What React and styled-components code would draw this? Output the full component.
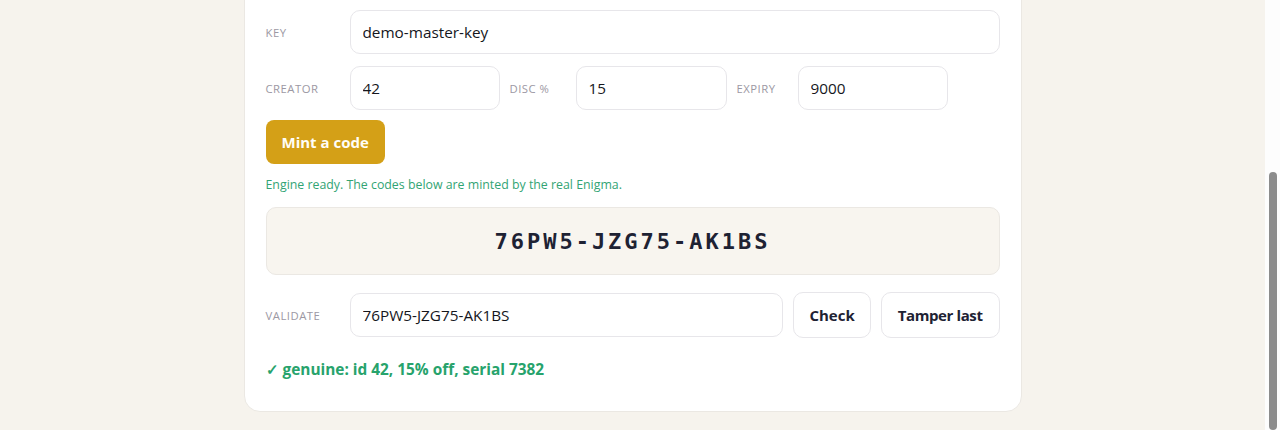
import React, { useLayoutEffect, useRef, useState } from "react";
import styled, { createGlobalStyle } from "styled-components";

const GlobalStyle = createGlobalStyle`
  html, body {
    margin: 0;
    padding: 0;
    background: #f6f3ed;
    font-family: "Open Sans", "Noto Sans", "Liberation Sans", sans-serif;
    overflow: hidden;
  }
  * { box-sizing: border-box; }
`;

const Shell = styled.div`
  height: 100vh;
  display: flex;
  background: #f6f3ed;
`;

const ScrollArea = styled.div`
  flex: 1 1 auto;
  min-width: 0;
  height: 100%;
  overflow-y: auto;
  scrollbar-width: none;
  &::-webkit-scrollbar {
    display: none;
  }
`;

/* slim scrollbar rail drawn beside the scroll area */
const Rail = styled.div`
  flex: none;
  width: 15px;
  height: 100%;
  background: #fdfdfd;
  display: flex;
  justify-content: center;
`;

const Thumb = styled.div`
  width: 8px;
  border-radius: 4px;
  background: #8c8c8c;
`;

const Page = styled.main`
  padding: 260px 0 18px;
`;

const Card = styled.section`
  width: 778px;
  margin: 0 auto;
  background: #ffffff;
  border: 1px solid #ebe8e3;
  border-radius: 16px;
  padding: 36px 21px 31px;
  display: flex;
  flex-direction: column;
`;

const Row = styled.div`
  display: flex;
  align-items: center;
  gap: 10px;
  margin-top: ${(p) => p.$mt || 0}px;
`;

const Label = styled.label`
  flex: none;
  width: ${(p) => p.$w}px;
  font-size: 11.3px;
  letter-spacing: 0.5px;
  text-transform: uppercase;
  color: #9c98a3;
`;

const Field = styled.input`
  height: 44px;
  width: ${(p) => (p.$w ? `${p.$w}px` : "auto")};
  flex: ${(p) => (p.$w ? "none" : "1 1 auto")};
  min-width: 0;
  border: 1px solid #e7e6ea;
  border-radius: 10px;
  background: #fff;
  padding: 0 12px;
  font: inherit;
  font-size: 15.3px;
  color: #15161c;
  outline: none;
`;

const MintButton = styled.button`
  align-self: flex-start;
  height: 44px;
  margin-top: 10px;
  padding: 0 16px;
  border: none;
  border-radius: 8px;
  background: #d4a017;
  color: #fffdf6;
  font: inherit;
  font-size: 15px;
  font-weight: 700;
  cursor: pointer;
`;

const Status = styled.p`
  margin: 12px 0 0;
  font-size: 12.35px;
  line-height: 18px;
  color: ${(p) => p.$color};
`;

const CodeBox = styled.div`
  margin-top: 13px;
  height: 68px;
  border: 1px solid #ebe8e3;
  border-radius: 10px;
  background: #f8f5ef;
  display: flex;
  align-items: center;
  justify-content: center;
  font-family: "DejaVu Sans Mono", "Liberation Mono", monospace;
  font-size: 22px;
  font-weight: 700;
  letter-spacing: 3px;
  color: #1e2233;
`;

const GhostButton = styled.button`
  flex: none;
  height: 46px;
  padding: 0 ${(p) => p.$pad || 16}px;
  border: 1px solid #e7e6ea;
  border-radius: 10px;
  background: #fff;
  color: #1e2233;
  font: inherit;
  font-size: 15px;
  font-weight: 700;
  letter-spacing: ${(p) => p.$ls || 0}px;
  cursor: pointer;
`;

const Result = styled.p`
  margin: 22px 0 0;
  font-size: 15.4px;
  line-height: 20px;
  font-weight: 700;
  color: #27a36c;
`;

export default function App() {
  const viewRef = useRef(null);
  const [thumb, setThumb] = useState({ top: 0, height: 0 });
  const [code] = useState("76PW5-JZG75-AK1BS");
  const [check, setCheck] = useState("76PW5-JZG75-AK1BS");

  const syncThumb = () => {
    const el = viewRef.current;
    if (!el) return;
    const { scrollTop, scrollHeight, clientHeight } = el;
    setThumb({
      top: (scrollTop / scrollHeight) * clientHeight,
      height: (clientHeight / scrollHeight) * clientHeight,
    });
  };

  useLayoutEffect(() => {
    const el = viewRef.current;
    if (el) el.scrollTop = el.scrollHeight;
    syncThumb();
  }, []);

  return (
    <>
      <GlobalStyle />
      <Shell>
        <ScrollArea ref={viewRef} onScroll={syncThumb}>
          <Page>
            <Card>
              <Row>
                <Label $w={74}>Key</Label>
                <Field defaultValue="demo-master-key" />
              </Row>
              <Row $mt={12}>
                <Label $w={74}>Creator</Label>
                <Field $w={150} defaultValue="42" />
                <Label $w={56}>Disc %</Label>
                <Field $w={151} defaultValue="15" />
                <Label $w={51}>Expiry</Label>
                <Field $w={150} defaultValue="9000" />
              </Row>
              <MintButton>Mint a code</MintButton>
              <Status $color="#32a474">
                Engine ready. The codes below are minted by the real Enigma.
              </Status>
              <CodeBox>{code}</CodeBox>
              <Row $mt={17}>
                <Label $w={74}>Validate</Label>
                <Field value={check} onChange={(e) => setCheck(e.target.value)} />
                <GhostButton $pad={15}>Check</GhostButton>
                <GhostButton $ls={-0.4}>Tamper last</GhostButton>
              </Row>
              <Result>✓ genuine: id 42, 15% off, serial 7382</Result>
            </Card>
          </Page>
        </ScrollArea>
        <Rail>
          <Thumb style={{ marginTop: thumb.top, height: thumb.height }} />
        </Rail>
      </Shell>
    </>
  );
}
